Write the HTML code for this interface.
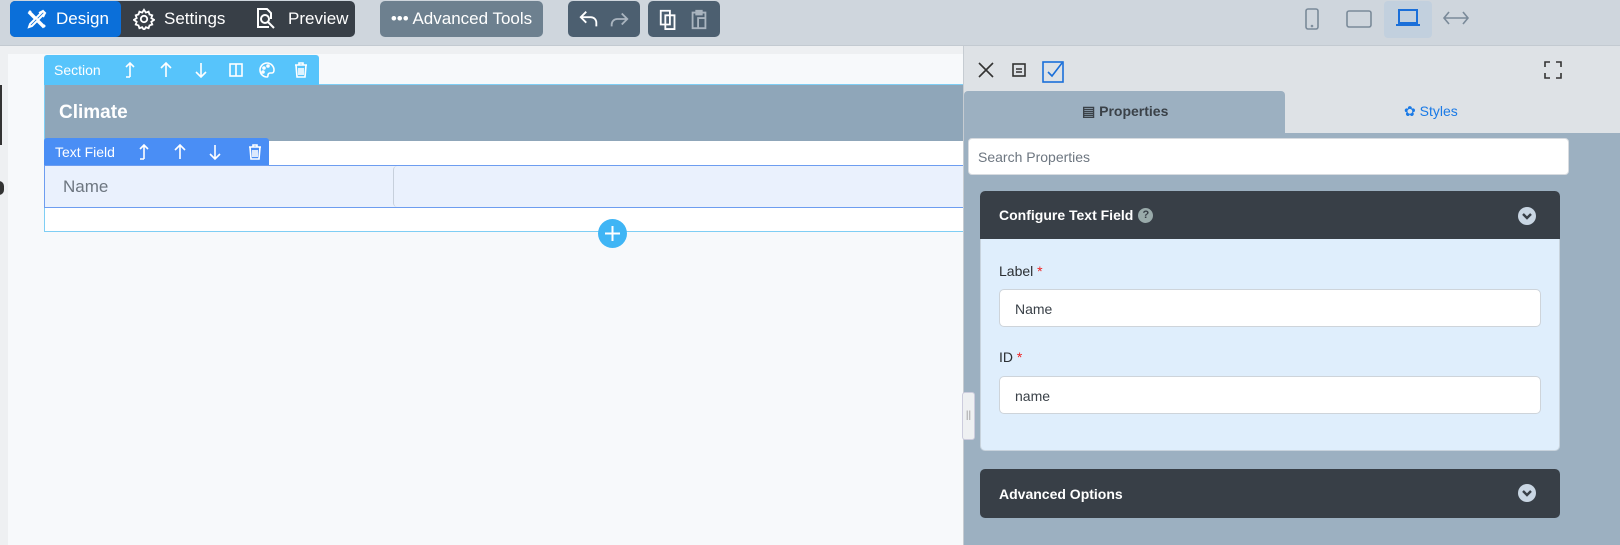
<!DOCTYPE html>
<html><head><meta charset="utf-8"><style>
*{box-sizing:border-box;margin:0;padding:0}
body{width:1620px;height:545px;overflow:hidden;background:#eef0f2;font-family:"Liberation Sans",sans-serif;position:relative}
.abs{position:absolute}
.top{left:0;top:0;width:1620px;height:46px;background:#cfd6dd;border-bottom:1px solid #c3cad1}
.btn{position:absolute;top:1px;height:36px;border-radius:5px;color:#fff;font-size:17px;display:flex;align-items:center}
svg{display:block}
.tb{position:absolute;display:flex;align-items:center;color:#fff;font-size:14px}
.hdr{display:flex;align-items:center}
</style></head><body>
<div class="abs top"></div>
<div class="btn" style="left:10px;width:345px;background:#383f47"></div>
<div class="btn" style="left:10px;width:111px;background:#0b6fd9;padding-left:16px">
<svg width="22" height="22" viewBox="0 0 22 22" fill="none" stroke="#fff" stroke-width="2"><path d="M3 3l16 16M5 3l-2 2 6 6M19 17l-2 2-6-6M13 5l4-2 2 2-2 4M3 19l3-1 13-13-2-2L4 16z"/></svg><span style="margin-left:8px">Design</span></div>
<div class="btn" style="left:133px;padding-left:0">
<svg width="22" height="22" viewBox="0 0 24 24" fill="none" stroke="#fff" stroke-width="2"><circle cx="12" cy="12" r="3.5"/><path d="M12 2l2 3 3-1 1 3 3 1-1 3 3 2-3 2 1 3-3 1-1 3-3-1-2 3-2-3-3 1-1-3-3-1 1-3-3-2 3-2-1-3 3-1 1-3 3 1z"/></svg><span style="margin-left:9px">Settings</span></div>
<div class="btn" style="left:254px">
<svg width="24" height="24" viewBox="0 0 24 24" fill="none" stroke="#fff" stroke-width="2"><path d="M15 20H4V2h9l4 4v6"/><circle cx="11" cy="12" r="4"/><path d="M14 15l6 6"/></svg><span style="margin-left:10px">Preview</span></div>
<div class="btn" style="left:380px;width:163px;background:#6d808f;justify-content:center">••• Advanced Tools</div>
<div class="btn" style="left:568px;width:72px;background:#4c5f70;justify-content:space-around;padding:0 6px">
<svg width="22" height="22" viewBox="0 0 24 24" fill="none" stroke="#fff" stroke-width="2"><path d="M9 4L3 10l6 6M3 10h11a6 6 0 016 6v4"/></svg>
<svg width="22" height="22" viewBox="0 0 24 24" fill="none" stroke="#a9b4bf" stroke-width="2"><path d="M15 6l6 6-6 6M21 12H10a6 6 0 00-6 6v2"/></svg></div>
<div class="btn" style="left:648px;width:72px;background:#4c5f70;justify-content:space-around;padding:0 6px">
<svg width="22" height="22" viewBox="0 0 24 24" fill="none" stroke="#fff" stroke-width="2"><path d="M3 3h10v15H3z M8 8h10v15H8z"/></svg>
<svg width="22" height="22" viewBox="0 0 24 24" fill="none" stroke="#a9b4bf" stroke-width="2"><path d="M5 5h14v17H5z M9 3h6v4H9z M11 11h8v11h-8z"/></svg></div>
<svg class="abs" style="left:1304px;top:7px" width="16" height="24" viewBox="0 0 16 24" fill="none" stroke="#7a8a99" stroke-width="1.6"><rect x="2" y="2" width="12" height="20" rx="2"/><circle cx="8" cy="19" r=".5"/></svg>
<svg class="abs" style="left:1344px;top:8px" width="30" height="22" viewBox="0 0 30 22" fill="none" stroke="#7a8a99" stroke-width="1.6"><rect x="3" y="3" width="24" height="16" rx="2"/></svg>
<div class="abs" style="left:1384px;top:1px;width:48px;height:37px;background:#c2d0de;border-radius:4px"></div>
<svg class="abs" style="left:1394px;top:7px" width="28" height="22" viewBox="0 0 28 22" fill="none" stroke="#1a6fd9" stroke-width="2"><rect x="5" y="3" width="18" height="13"/><path d="M2 18h24"/></svg>
<svg class="abs" style="left:1442px;top:9px" width="28" height="18" viewBox="0 0 28 18" fill="none" stroke="#7a8a99" stroke-width="1.6"><path d="M2 9h24M7 3L2 9l5 6M21 3l5 6-5 6"/></svg>
<div class="abs" style="left:8px;top:54px;width:955px;height:491px;background:#f7f9fb"></div>
<div class="abs" style="left:0;top:85px;width:2px;height:60px;background:#333"></div>
<div class="abs" style="left:-6px;top:181px;width:10px;height:14px;border-radius:7px;background:#333"></div>
<div class="abs" style="left:44px;top:84px;width:920px;height:148px;border:1px solid #7fcef4;background:#fff"></div>
<div class="abs" style="left:45px;top:85px;width:918px;height:56px;background:#8fa6b9"></div>
<div class="abs" style="left:59px;top:102px;color:#fff;font-weight:bold;font-size:19px">Climate</div>
<div class="tb" style="left:44px;top:55px;width:275px;height:30px;background:#57c4fb;border-radius:3px 3px 0 0;padding-left:10px">Section
<svg style="margin-left:20px" width="18" height="18" viewBox="0 0 18 18" fill="none" stroke="#fff" stroke-width="1.6"><path d="M9 16V2M5 6l4-4 4 4M5 16h4"/></svg>
<svg style="margin-left:18px" width="18" height="18" viewBox="0 0 18 18" fill="none" stroke="#fff" stroke-width="1.6"><path d="M9 16V2M4 7l5-5 5 5"/></svg>
<svg style="margin-left:17px" width="18" height="18" viewBox="0 0 18 18" fill="none" stroke="#fff" stroke-width="1.6"><path d="M9 2v14M4 11l5 5 5-5"/></svg>
<svg style="margin-left:17px" width="18" height="18" viewBox="0 0 18 18" fill="none" stroke="#fff" stroke-width="1.6"><rect x="3" y="3" width="12" height="12"/><path d="M9 3v12"/></svg>
<svg style="margin-left:13px" width="18" height="18" viewBox="0 0 18 18" fill="none" stroke="#fff" stroke-width="1.6"><path d="M9 2a7 7 0 100 14c1 0 1-1 1-2s1-2 2-2h2c1 0 2-1 2-3a7 7 0 00-7-7z"/><circle cx="6" cy="7" r="1"/><circle cx="10" cy="5" r="1"/><circle cx="5" cy="11" r="1"/></svg>
<svg style="margin-left:16px" width="18" height="18" viewBox="0 0 18 18" fill="none" stroke="#fff" stroke-width="1.6"><path d="M3 4h12M7 4V2h4v2M4 4l1 12h8l1-12M7 7v7M9 7v7M11 7v7"/></svg></div>
<div class="tb" style="left:44px;top:138px;width:225px;height:28px;background:#4a8ef5;border-radius:3px 3px 0 0;padding-left:11px">Text Field
<svg style="margin-left:20px" width="18" height="18" viewBox="0 0 18 18" fill="none" stroke="#fff" stroke-width="1.6"><path d="M9 16V2M5 6l4-4 4 4M5 16h4"/></svg>
<svg style="margin-left:18px" width="18" height="18" viewBox="0 0 18 18" fill="none" stroke="#fff" stroke-width="1.6"><path d="M9 16V2M4 7l5-5 5 5"/></svg>
<svg style="margin-left:17px" width="18" height="18" viewBox="0 0 18 18" fill="none" stroke="#fff" stroke-width="1.6"><path d="M9 2v14M4 11l5 5 5-5"/></svg>
<svg style="margin-left:22px" width="18" height="18" viewBox="0 0 18 18" fill="none" stroke="#fff" stroke-width="1.6"><path d="M3 4h12M7 4V2h4v2M4 4l1 12h8l1-12M7 7v7M9 7v7M11 7v7"/></svg></div>
<div class="abs" style="left:44px;top:165px;width:920px;height:43px;border:1px solid #6d9df0;background:#eaf1fd"></div>
<div class="abs" style="left:393px;top:166px;width:571px;height:41px;border-left:1px solid #c7d0dc;border-radius:4px"></div>
<div class="abs" style="left:63px;top:177px;color:#6d7680;font-size:17px">Name</div>
<div class="abs" style="left:598px;top:219px;width:29px;height:29px;border-radius:50%;background:#3fb5f5"></div>
<svg class="abs" style="left:598px;top:219px" width="29" height="29" viewBox="0 0 29 29" stroke="#fff" stroke-width="2"><path d="M14.5 7v15M7 14.5h15"/></svg>
<div class="abs" style="left:963px;top:46px;width:657px;height:499px;background:#9cb0c1;border-left:1px solid #c6ccd2"></div>
<div class="abs" style="left:964px;top:46px;width:656px;height:87px;background:#dee2e6"></div>
<div class="abs" style="left:964px;top:91px;width:321px;height:42px;background:#9cb0c1;border-radius:4px 4px 0 0"></div>
<div class="abs" style="left:962px;top:392px;width:13px;height:48px;background:#eef0f2;border:1px solid #ccd;border-radius:3px;color:#999;font-size:10px;text-align:center;line-height:46px">||</div>
<svg class="abs" style="left:977px;top:61px" width="18" height="18" viewBox="0 0 18 18" stroke="#333" stroke-width="1.6"><path d="M2 2l14 14M16 2L2 16"/></svg>
<svg class="abs" style="left:1010px;top:61px" width="18" height="18" viewBox="0 0 18 18" fill="none" stroke="#333" stroke-width="1.6"><rect x="3" y="3" width="12" height="12"/><path d="M6 8h6M6 11h6"/></svg>
<svg class="abs" style="left:1041px;top:59px" width="26" height="26" viewBox="0 0 26 26" fill="none" stroke="#1a6fd9" stroke-width="1.6"><rect x="2" y="3" width="20" height="20"/><path d="M7 13l4 4 10-13"/></svg>
<svg class="abs" style="left:1543px;top:60px" width="20" height="20" viewBox="0 0 20 20" fill="none" stroke="#333" stroke-width="1.6"><path d="M2 7V2h5M13 2h5v5M18 13v5h-5M7 18H2v-5"/></svg>
<div class="abs" style="left:1082px;top:103px;font-size:14px;font-weight:bold;color:#3a4148">▤ Properties</div>
<div class="abs" style="left:1404px;top:103px;font-size:14px;color:#1a7ae6">✿ Styles</div>
<div class="abs" style="left:968px;top:138px;width:601px;height:37px;background:#fff;border-radius:4px;border:1px solid #d7dbe0;padding:10px 0 0 9px;font-size:14px;color:#6d7680">Search Properties</div>
<div class="abs" style="left:980px;top:191px;width:580px;height:260px;background:#dfeefc;border-radius:5px;border:1px solid #c8d3dd"></div>
<div class="abs hdr" style="left:980px;top:191px;width:580px;height:48px;background:#383f47;border-radius:5px 5px 0 0;color:#fff;font-weight:bold;font-size:14px;padding-left:19px">Configure Text Field <span style="display:inline-block;margin-left:5px;width:15px;height:15px;border-radius:50%;background:#9aa;color:#383f47;font-size:11px;text-align:center;line-height:15px">?</span></div>
<div class="abs" style="left:1518px;top:207px;width:18px;height:18px;border-radius:50%;background:#c9d6e3"></div>
<svg class="abs" style="left:1518px;top:207px" width="18" height="18" viewBox="0 0 18 18" fill="none" stroke="#383f47" stroke-width="2.4"><path d="M5 7l4 4 4-4"/></svg>
<div class="abs" style="left:999px;top:263px;font-size:14px;color:#2b2f33">Label <span style="color:#e22">*</span></div>
<div class="abs" style="left:999px;top:289px;width:542px;height:38px;background:#fff;border:1px solid #ced4da;border-radius:5px;padding:11px 0 0 15px;font-size:14px;color:#3a4148">Name</div>
<div class="abs" style="left:999px;top:349px;font-size:14px;color:#2b2f33">ID <span style="color:#e22">*</span></div>
<div class="abs" style="left:999px;top:376px;width:542px;height:38px;background:#fff;border:1px solid #ced4da;border-radius:5px;padding:11px 0 0 15px;font-size:14px;color:#3a4148">name</div>
<div class="abs hdr" style="left:980px;top:469px;width:580px;height:49px;background:#383f47;border-radius:5px;color:#fff;font-weight:bold;font-size:14px;padding-left:19px">Advanced Options</div>
<div class="abs" style="left:1518px;top:484px;width:18px;height:18px;border-radius:50%;background:#c9d6e3"></div>
<svg class="abs" style="left:1518px;top:484px" width="18" height="18" viewBox="0 0 18 18" fill="none" stroke="#383f47" stroke-width="2.4"><path d="M5 7l4 4 4-4"/></svg>
</body></html>
